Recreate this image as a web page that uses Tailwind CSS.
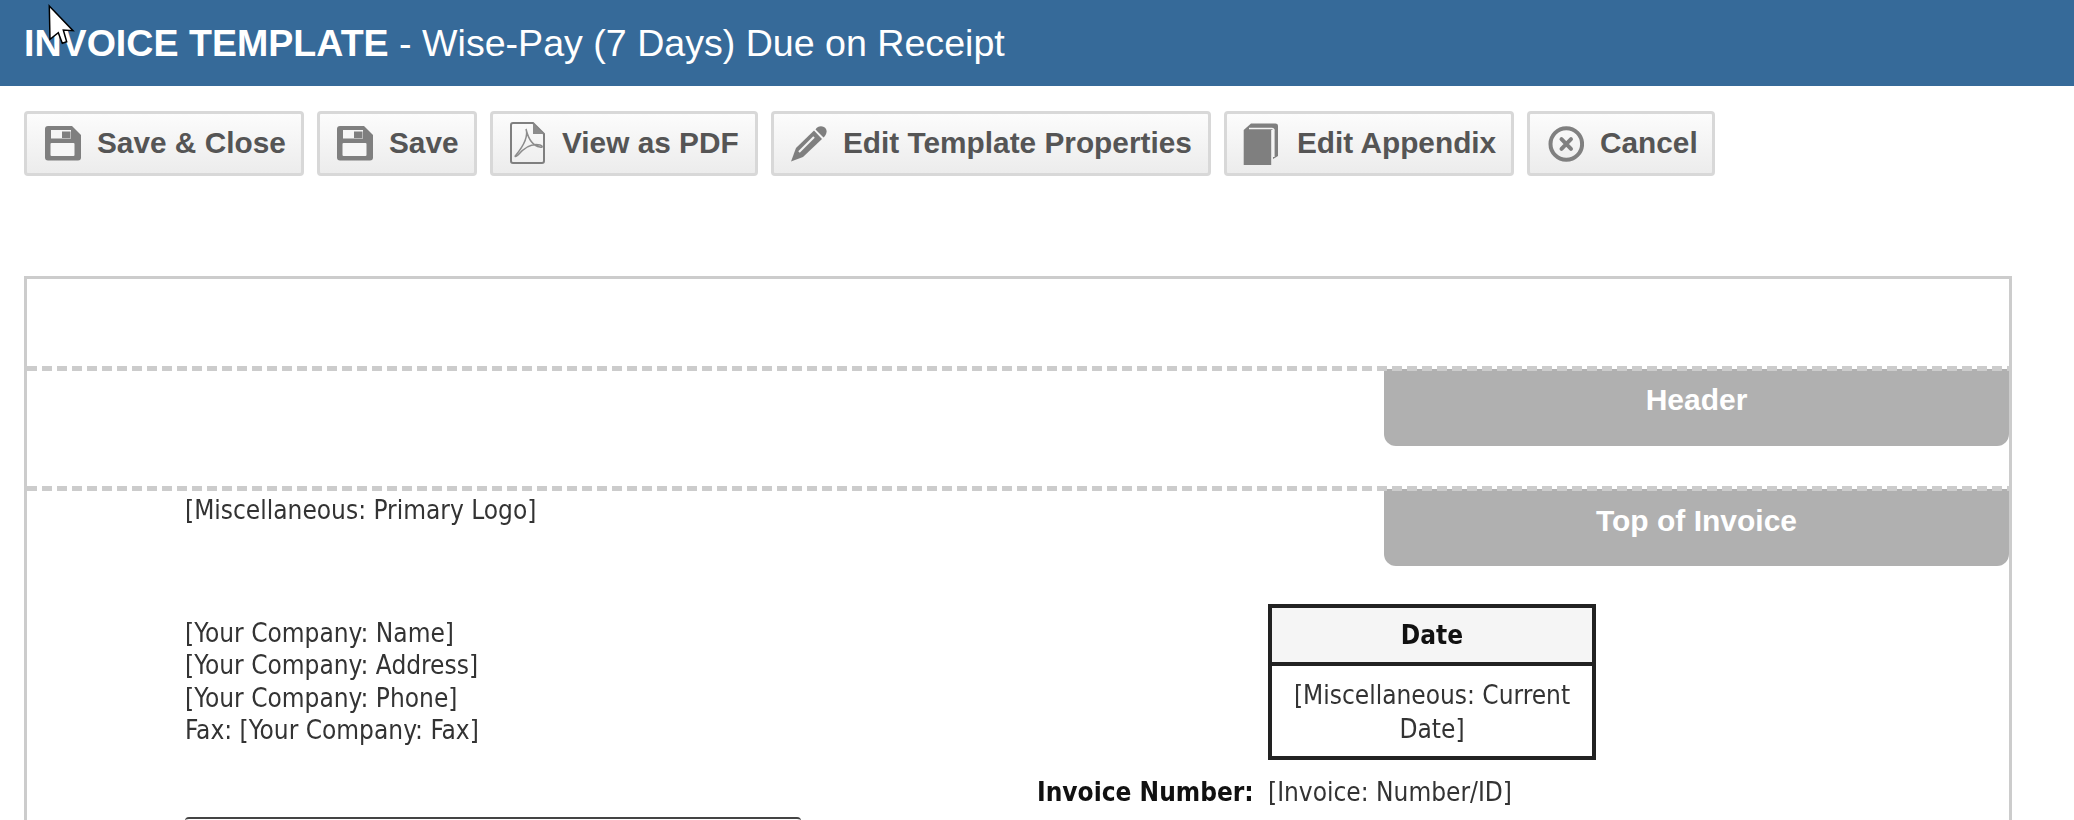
<!DOCTYPE html>
<html lang="en">
<head>
    <meta charset="UTF-8">
    <title>Invoice Template</title>
    <script src="https://cdn.jsdelivr.net/npm/@tailwindcss/browser@4"></script>
</head>
<body class="relative h-[820px] overflow-hidden bg-white font-['Liberation_Sans',Arial,sans-serif]">

    <!-- Title bar -->
    <div class="flex h-[86px] items-center bg-[#366a99] pl-[24px] text-[37.6px] text-white">
        <span><b>INVOICE TEMPLATE</b> - Wise-Pay (7 Days) Due on Receipt</span>
    </div>

    <!-- Toolbar -->
    <div class="flex gap-[13px] pl-[24px] pt-[25px] text-[29.8px] font-bold text-[#555]">
        <button class="flex h-[65px] w-[280px] items-center rounded-[4px] border-[3px] border-[#d8d8d8] bg-linear-to-b from-[#fcfcfc] to-[#ececec] pl-[18px]">
            <svg class="h-[35px] w-[36px] shrink-0" viewBox="9 9 36 35"><path fill="#7f7f7f" d="M12 9H36L45 18V40.5A3 3 0 0 1 42 43.5H12A3 3 0 0 1 9 40.5V12A3 3 0 0 1 12 9Z"/><rect x="14.5" y="26" width="24" height="13" rx="1" fill="#f6f6f6"/><rect x="15" y="13" width="20" height="8.5" fill="#f6f6f6"/><rect x="26" y="14.5" width="8.5" height="6.5" fill="#7f7f7f"/></svg>
            <span class="ml-[16px]">Save &amp; Close</span>
        </button>
        <button class="flex h-[65px] w-[160px] items-center rounded-[4px] border-[3px] border-[#d8d8d8] bg-linear-to-b from-[#fcfcfc] to-[#ececec] pl-[17px]">
            <svg class="h-[35px] w-[36px] shrink-0" viewBox="9 9 36 35"><path fill="#7f7f7f" d="M12 9H36L45 18V40.5A3 3 0 0 1 42 43.5H12A3 3 0 0 1 9 40.5V12A3 3 0 0 1 12 9Z"/><rect x="14.5" y="26" width="24" height="13" rx="1" fill="#f6f6f6"/><rect x="15" y="13" width="20" height="8.5" fill="#f6f6f6"/><rect x="26" y="14.5" width="8.5" height="6.5" fill="#7f7f7f"/></svg>
            <span class="ml-[16px]">Save</span>
        </button>
        <button class="flex h-[65px] w-[268px] items-center rounded-[4px] border-[3px] border-[#d8d8d8] bg-linear-to-b from-[#fcfcfc] to-[#ececec] pl-[17px]">
            <svg class="h-[43px] w-[36px] shrink-0" viewBox="9 8 36 43"><path fill="none" stroke="#7f7f7f" stroke-width="2" d="M12 9H32L43 20V47A2 2 0 0 1 41 49H12A2 2 0 0 1 10 47V11A2 2 0 0 1 12 9Z"/><path fill="#8c8c8c" d="M32 9L43 20H32Z"/><path fill="none" stroke="#8c8c8c" stroke-width="1.5" d="M25 15C27 21 24 30 15 41C13 43 15 43 17 41C23 34 31 29 39 31C42 32 42 34 39 33C33 32 28 28 25 15Z"/></svg>
            <span class="ml-[16px]">View as PDF</span>
        </button>
        <button class="flex h-[65px] w-[440px] items-center rounded-[4px] border-[3px] border-[#d8d8d8] bg-linear-to-b from-[#fcfcfc] to-[#ececec] pl-[16px]">
            <svg class="h-[38px] w-[37px] shrink-0" viewBox="9 8 37 38"><path fill="#7f7f7f" d="M10 44.5L15 31L33 13.5L41 22L22 40Z"/><path fill="#7f7f7f" d="M34.5 12.5C37 8 43 8.5 45 12C46.5 15 45 18 42.5 20.5Z"/><path stroke="#f3f3f3" stroke-width="2.2" d="M18 35L33 20"/></svg>
            <span class="ml-[16px]">Edit Template Properties</span>
        </button>
        <button class="flex h-[65px] w-[290px] items-center rounded-[4px] border-[3px] border-[#d8d8d8] bg-linear-to-b from-[#fcfcfc] to-[#ececec] pl-[16px]">
            <svg class="h-[42px] w-[36px] shrink-0" viewBox="11 7 36 42"><path fill="#7f7f7f" d="M11.7 14L19 7.5H43A2.500 2.500 0 0 1 46 10V40L41 43V14Z"/><path fill="none" stroke="#f4f4f4" stroke-width="1.6" d="M17 12.500H39.500A2 2 0 0 1 41.800 15V41"/><rect x="11.700" y="14" width="27.500" height="35" fill="#7f7f7f"/></svg>
            <span class="ml-[18px]">Edit Appendix</span>
        </button>
        <button class="flex h-[65px] w-[188px] items-center rounded-[4px] border-[3px] border-[#d8d8d8] bg-linear-to-b from-[#fcfcfc] to-[#ececec] pl-[18px]">
            <svg class="h-[36px] w-[36px] shrink-0" viewBox="10 12 36 36"><circle cx="28.300" cy="30" r="15.800" fill="none" stroke="#808080" stroke-width="4"/><path stroke="#808080" stroke-width="4" stroke-linecap="round" d="M23.500 25.200L33 34.800M33 25.200L23.500 34.800"/></svg>
            <span class="ml-[16px]">Cancel</span>
        </button>
    </div>

    <!-- Template document -->
    <div class="ml-[24px] mt-[100px] w-[1988px] border-[3px] border-b-0 border-[#ccc]">
        <div class="h-[87px]"></div>

        <div class="relative z-10 h-[5px] bg-[repeating-linear-gradient(90deg,#ccc_0,#ccc_10px,transparent_10px,transparent_15px)]"></div>
        <div class="flex h-[115px] justify-end">
            <div class="-mt-[2px] flex h-[77px] w-[625px] items-center justify-center rounded-b-[12px] bg-[#b0b0b0] pb-[16px] text-[30px] font-bold text-white">Header</div>
        </div>

        <div class="relative z-10 h-[5px] bg-[repeating-linear-gradient(90deg,#ccc_0,#ccc_10px,transparent_10px,transparent_15px)]"></div>
        <div class="relative h-[330px] font-['DejaVu_Sans',sans-serif] text-[26px] leading-[32.5px] font-stretch-condensed text-[#333]">
            <div class="absolute -top-[2px] right-0 flex h-[77px] w-[625px] items-center justify-center rounded-b-[12px] bg-[#b0b0b0] pb-[12px] font-['Liberation_Sans',Arial,sans-serif] text-[30px] font-bold text-white [font-stretch:normal]">Top of Invoice</div>

            <div class="flex">
                <div class="w-[1010px] pl-[158px] pt-[3px] blur-[0.3px]">
                    <p>[Miscellaneous: Primary Logo]</p>
                    <p class="mt-[90px]">[Your Company: Name]</p>
                    <p>[Your Company: Address]</p>
                    <p>[Your Company: Phone]</p>
                    <p>Fax: [Your Company: Fax]</p>
                    <div class="mt-[70px] h-[6px] w-[616px] rounded-t-[4px] border-t-2 border-[#444]"></div>
                </div>
                <div class="pt-[113px] blur-[0.3px]">
                    <div class="ml-[231px] w-[328px] border-[4px] border-[#222] text-center">
                        <div class="flex h-[58px] items-center justify-center border-b-[4px] border-[#222] bg-[#f5f5f5] font-bold text-[#111]">Date</div>
                        <div class="px-[6px] pb-[10px] pt-[12px] leading-[34px]">[Miscellaneous: Current Date]</div>
                    </div>
                    <div class="mt-[16px] flex">
                        <b class="w-[231px] text-[#111]">Invoice Number:</b>
                        <span>[Invoice: Number/ID]</span>
                    </div>
                </div>
            </div>
        </div>
    </div>

    <!-- Mouse pointer captured in the screenshot -->
    <svg class="absolute left-[46px] top-[3px] h-[44px] w-[30px]" viewBox="46 3 30 44"><path fill="#fff" stroke="#000" stroke-width="1.500" d="M49.300 6L73 30.700L63.300 30L66.700 41.700L62.300 43.300L58.300 32.700L50 39.300Z"/></svg>
</body>
</html>
